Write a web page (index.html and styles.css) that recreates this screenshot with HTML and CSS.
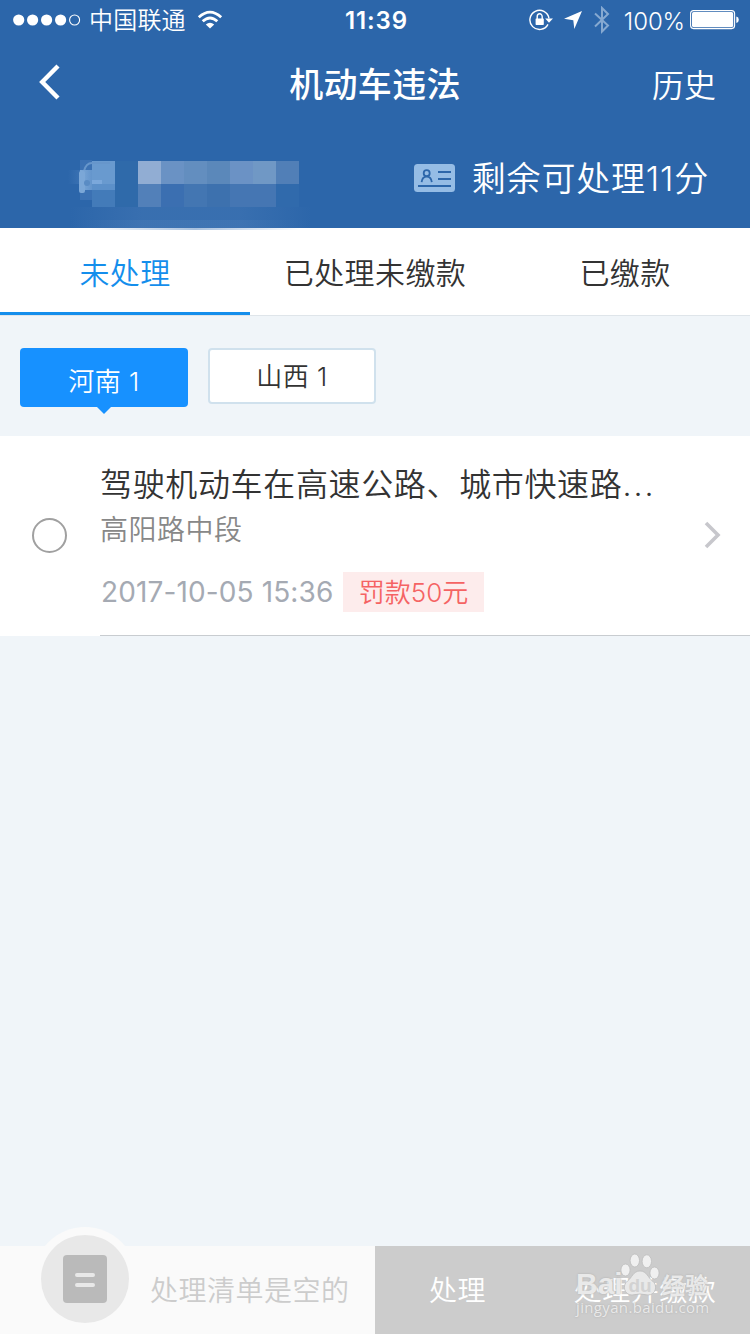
FILE: index.html
```html
<!DOCTYPE html>
<html lang="zh-CN">
<head>
<meta charset="utf-8">
<title>机动车违法</title>
<link rel="stylesheet" href="styles.css">
</head>
<body>
<div class="screen">
  <header class="header">
    <div class="status">
      <div class="status-left">
        <svg class="signal" width="68" height="12" viewBox="0 0 68 12"><g fill="#fff"><circle cx="5.7" cy="6" r="5.6"/><circle cx="19.6" cy="6" r="5.6"/><circle cx="33.6" cy="6" r="5.6"/><circle cx="47.6" cy="6" r="5.6"/></g><circle cx="61.6" cy="6" r="5" fill="none" stroke="#fff" stroke-width="1.1"/></svg>
        <span class="carrier">中国联通</span>
        <svg class="wifi" width="26" height="20" viewBox="0 0 26 20"><g fill="none" stroke="#fff" stroke-width="2.8"><path d="M1.8 7.2Q13-3 24.2 7.2"/><path d="M5.7 11.3Q13 4.6 20.3 11.3"/></g><path d="M8.8 14.5Q13 11.2 17.2 14.5L13 18.6Z" fill="#fff"/></svg>
      </div>
      <div class="clock">11:39</div>
      <div class="status-right">
        <svg class="lock" width="24" height="22" viewBox="0 0 24 22"><path d="M19 15.4A9.6 9.6 0 1 1 20 9.5" fill="none" stroke="#fff" stroke-width="1.4"/><path d="M16.2 9.5H24L20 13.8Z" fill="#fff"/><rect x="6.6" y="9.5" width="8.2" height="6.4" rx=".6" fill="#fff"/><path d="M8.2 10V7.7a2.5 2.9 0 0 1 5 0V10" fill="none" stroke="#fff" stroke-width="1.4"/></svg>
        <svg class="locate" width="18" height="18" viewBox="0 0 18 18"><path d="M18 0L10.3 18L9.3 9.3L0 7.7Z" fill="#fff"/></svg>
        <svg class="bluetooth" width="16" height="28" viewBox="0 0 16 28"><path d="M1 7.5L14 19.5L8 25.5V2L14 8L1 20.5" fill="none" stroke="#86a9d1" stroke-width="2"/></svg>
        <span class="percent">100%</span>
        <svg class="battery" width="50" height="20" viewBox="0 0 50 20"><rect x=".6" y=".6" width="44" height="18" rx="3" fill="none" stroke="#fff" stroke-width="1.1"/><rect x="2" y="2" width="41.2" height="15.2" rx="1.7" fill="#fff"/><path d="M46.3 6.5q2.5.6 2.5 3.3t-2.5 3.3z" fill="#fff"/></svg>
      </div>
    </div>
    <nav class="nav">
      <svg class="back" width="22" height="36" viewBox="0 0 22 36"><path d="M19 2L3.2 18L19 34" fill="none" stroke="#fff" stroke-width="4.4"/></svg>
      <h1 class="nav-title">机动车违法</h1>
      <a class="history">历史</a>
    </nav>
    <div class="driver">
      <svg class="plate" width="260" height="72" viewBox="0 0 260 72">
        <defs>
          <linearGradient id="fade" x1="0" x2="1"><stop offset="0" stop-color="#5584bd" stop-opacity="0"/><stop offset=".3" stop-color="#5584bd" stop-opacity=".5"/><stop offset=".7" stop-color="#5584bd" stop-opacity=".5"/><stop offset="1" stop-color="#5584bd" stop-opacity="0"/></linearGradient>
          <linearGradient id="edge" x1="0" x2="1"><stop offset="0" stop-color="#5584bd" stop-opacity="0"/><stop offset=".5" stop-color="#5584bd" stop-opacity=".5"/><stop offset="1" stop-color="#5584bd" stop-opacity="0"/></linearGradient>
          <linearGradient id="soft" x1="0" x2="1"><stop offset="0" stop-color="#4e82c0" stop-opacity="0"/><stop offset="1" stop-color="#4e82c0" stop-opacity=".4"/></linearGradient>
          <linearGradient id="glow" x1="0" x2="1"><stop offset="0" stop-color="#7da9d8"/><stop offset="1" stop-color="#6495cc"/></linearGradient>
        </defs>
        <rect x="20" y="47" width="242" height="21" fill="url(#fade)" opacity=".6"/>
        <rect x="20" y="60" width="242" height="8" fill="url(#fade)" opacity=".5"/>
        <rect x="40" y="68" width="210" height="2" fill="url(#edge)"/>
        <rect x="18" y="10" width="12" height="14" fill="url(#soft)"/>
        <rect x="30" y="0" width="12" height="40" fill="#3b71b3"/>
        <rect x="42" y="1" width="23" height="23" fill="#699acf"/>
        <path d="M34 11q2-8 8-8h18" fill="none" stroke="#6796cb" stroke-width="2"/>
        <rect x="30" y="10" width="12" height="20" fill="url(#glow)"/>
        <rect x="29" y="11" width="6" height="22" rx="2" fill="#7ba7d7"/>
        <rect x="42" y="24" width="23" height="23" fill="#437bb9"/>
        <rect x="42" y="20" width="10" height="4" fill="#7ba8db"/>
        <rect x="42" y="24" width="23" height="6" fill="#5c90c9"/>
        <circle cx="37" cy="23" r="3" fill="#5a8cc4"/>
        <rect x="65" y="1" width="23" height="46" fill="#2f6aaa"/>
        <rect x="88" y="1" width="23" height="23" fill="#91add3"/><rect x="111" y="1" width="23" height="23" fill="#6a92c4"/><rect x="134" y="1" width="23" height="23" fill="#638ebf"/><rect x="157" y="1" width="23" height="23" fill="#5b88ba"/><rect x="180" y="1" width="23" height="23" fill="#6b92c5"/><rect x="203" y="1" width="23" height="23" fill="#7098c5"/><rect x="226" y="1" width="23" height="23" fill="#517fb7"/>
        <rect x="88" y="24" width="23" height="23" fill="#5280b9"/><rect x="111" y="24" width="23" height="23" fill="#3b6fb1"/><rect x="134" y="24" width="23" height="23" fill="#4376b2"/><rect x="157" y="24" width="23" height="23" fill="#3d71ae"/><rect x="180" y="24" width="46" height="23" fill="#4576b3"/><rect x="226" y="24" width="23" height="23" fill="#306aac"/>
      </svg>
      <div class="points">
        <svg class="idcard" width="41" height="28" viewBox="0 0 41 28"><rect width="41" height="28" rx="3.5" fill="#95bce5"/><g fill="none" stroke="#2c66aa" stroke-width="1.8"><circle cx="12.7" cy="9.2" r="3"/><path d="M7.6 18.2Q8.2 12.6 12.7 12.6T17.8 18.2M24 8h13M24 15h13M4 22h33"/></g></svg>
        <span class="points-text">剩余可处理<span class="points-num">11</span>分</span>
      </div>
    </div>
  </header>
  <div class="tabs">
    <div class="tab tab-active">未处理</div>
    <div class="tab">已处理未缴款</div>
    <div class="tab">已缴款</div>
  </div>
  <div class="regions">
    <div class="chip chip-active">河南 1</div>
    <div class="chip">山西 1</div>
  </div>
  <div class="record">
    <div class="radio"></div>
    <div class="record-body">
      <div class="record-text">
        <div class="record-title">驾驶机动车在高速公路、城市快速路<span class="dots">...</span></div>
        <div class="record-place">高阳路中段</div>
        <div class="record-meta"><span class="date">2017-10-05 15:36</span><span class="fine">罚款50元</span></div>
      </div>
      <svg class="chevron" width="18" height="28" viewBox="0 0 18 28"><path d="M2 2L14 14L2 26" fill="none" stroke="#c7c7cc" stroke-width="3.6"/></svg>
    </div>
  </div>
  <footer class="footer">
    <div class="basket">
      <svg class="basket-icon" width="104" height="107" viewBox="0 0 104 107"><circle cx="52" cy="52" r="52" fill="#fafafa"/><circle cx="52" cy="52" r="44" fill="#e8e8e8"/><rect x="30" y="28" width="44" height="48" rx="4" fill="#bababa"/><path d="M44 48h16M44 58h16" stroke="#e8e8e8" stroke-width="4" stroke-linecap="round"/></svg>
      <span class="basket-text">处理清单是空的</span>
    </div>
    <div class="action action-handle">处理</div>
    <div class="action action-pay">处理并缴款</div>
    <div class="watermark">
      <div class="brand"><span class="brand-bai">Bai</span><svg class="paw" width="40" height="44" viewBox="0 0 40 44"><g fill="#f0f0f0" stroke="#bcbcbc" stroke-width=".8"><ellipse cx="5.5" cy="17" rx="4.6" ry="6"/><ellipse cx="14.8" cy="7.5" rx="4.7" ry="6.5"/><ellipse cx="26.8" cy="8.3" rx="4.7" ry="6.5"/><ellipse cx="34.5" cy="20" rx="4.6" ry="6"/><path fill="#e9e9e9" d="M20 18C13 18 12 25 7.5 28C2 32 4 42 12 42Q20 40 28 42C36 42 38 32 32.5 28C28 25 27 18 20 18Z"/></g><text x="20" y="39" class="paw-text">du</text></svg><span class="brand-cn">经验</span></div>
      <div class="site">jingyan.baidu.com</div>
    </div>
  </footer>
</div>
</body>
</html>
```
FILE: styles.css
```css
* { box-sizing: border-box; }
body { margin: 0; font-family: Inter, "Noto Sans CJK SC", sans-serif; font-weight: 350; color: #333; }
svg { display: block; flex: none; }
.screen { width: 750px; height: 1334px; display: flex; flex-direction: column; background: #f0f5f9; overflow: hidden; white-space: nowrap; }
.header { height: 228px; background: #2c66aa; color: #fff; }
.status { height: 40px; display: grid; grid-template-columns: 1fr auto 1fr; grid-template-rows: 40px; align-items: center; }
.status-left { display: flex; align-items: center; padding-left: 13px; }
.carrier { margin-left: 8px; font-size: 24px; line-height: 40px; letter-spacing: .2px; padding-top: 2px; }
.wifi { margin-left: 11px; }
.clock { font-size: 24px; font-weight: 600; line-height: 40px; letter-spacing: .9px; padding: 1px 0 0 3px; }
.status-right { display: flex; align-items: center; justify-content: flex-end; padding-right: 10px; }
.locate { margin-left: 11px; }
.bluetooth { margin-left: 12px; }
.percent { margin: 0 5px 0 14px; padding-top: 2px; font-size: 24px; font-weight: 350; letter-spacing: -.1px; }
.nav { height: 88px; display: grid; grid-template-columns: 1fr auto 1fr; grid-template-rows: 88px; align-items: center; padding: 0 34px 0 39px; }
.back { margin-top: -4px; }
.nav-title { margin: 0 5px 0 0; font-size: 34px; font-weight: 500; line-height: 86px; letter-spacing: .3px; padding-top: 2px; }
.history { font-size: 32px; justify-self: end; line-height: 86px; padding-top: 3px; }
.driver { height: 100px; display: flex; justify-content: space-between; padding: 0 41px 0 50px; }
.plate { position: relative; margin-top: 32px; }
.points { display: flex; align-items: center; height: 100px; }
.points-text { margin-left: 17px; font-size: 34px; letter-spacing: .8px; line-height: 100px; padding-top: 2px; }
.tabs { height: 88px; display: grid; grid-template-columns: repeat(3, 1fr); background: #fff; border-bottom: 1px solid #dfe5ea; }
.tab { height: 87px; padding-top: 1px; text-align: center; font-size: 30px; letter-spacing: .4px; line-height: 88px; }
.tab-active { color: #148eec; border-bottom: 3px solid #148eec; }
.regions { height: 120px; display: flex; align-items: flex-start; gap: 20px; padding: 32px 20px 0; }
.chip { width: 168px; height: 56px; border: 2px solid #d0e1ed; border-radius: 4px; background: #fff; text-align: center; font-size: 26px; line-height: 54px; letter-spacing: .5px; }
.chip-active { position: relative; height: 59px; border: 0; background: #1791ff; color: #fff; line-height: 67px; }
.chip-active::after { content: ""; position: absolute; left: 76px; top: 58px; border: 8px solid transparent; border-top-color: #1791ff; border-bottom: 0; }
.record { height: 200px; display: flex; background: #fff; }
.radio { width: 35px; height: 35px; margin: 82px 33px 0 32px; border: 2px solid #a0a0a0; border-radius: 50%; flex: none; }
.record-body { flex: 1; height: 200px; display: flex; justify-content: space-between; align-items: center; padding-right: 28px; border-bottom: 1px solid #c8ccd0; }
.record-text { height: 200px; padding-top: 25px; }
.record-title { font-size: 32px; letter-spacing: .65px; line-height: 48px; }
.dots { letter-spacing: 2px; }
.record-place { font-size: 28px; letter-spacing: .5px; line-height: 42px; color: #888; }
.record-meta { display: flex; align-items: center; gap: 10px; margin-top: 21px; height: 40px; }
.date { padding: 1px 0 0 1px; font-size: 28px; font-weight: 400; color: #a5aab3; width: 233px; letter-spacing: .12px; }
.fine { width: 141px; height: 40px; line-height: 41px; background: #fdecec; color: #f56363; font-size: 26px; text-align: center; }
.chevron { margin-top: -2px; }
.footer { position: relative; margin-top: auto; height: 88px; display: flex; color: #fff; font-size: 28px; letter-spacing: .5px; line-height: 91px; }
.basket { width: 375px; display: flex; background: #fafafa; color: #ccc; }
.basket-icon { margin: -19px 0 0 33px; }
.basket-text { margin-left: 13px; }
.action { background: #ccc; text-align: center; }
.action-handle { width: 165px; }
.action-pay { width: 210px; }
.watermark { position: absolute; left: 576px; top: 7px; width: 140px; letter-spacing: 0; color: #e9e9e9; text-shadow: 0 0 2px #aaa; }
.brand { display: flex; align-items: flex-start; height: 45px; }
.brand-bai { width: 44px; font: bold 30px/62px "Liberation Sans", sans-serif; }
.brand-cn { margin-left: 2px; font: bold 23px/62px "Noto Sans CJK SC", sans-serif; }
.paw-text { font: bold 19px "Liberation Sans", sans-serif; fill: #d2d2d2; text-anchor: middle; text-shadow: none; }
.site { font: 15px/18px "Open Sans", sans-serif; letter-spacing: .35px; }
```
